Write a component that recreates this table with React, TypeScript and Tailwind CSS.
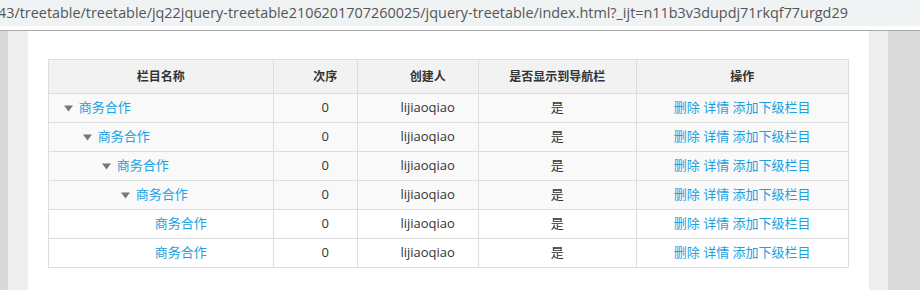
import React from "react";

type Row = { level: number; parent: boolean };

const ROWS: Row[] = [
  { level: 0, parent: true },
  { level: 1, parent: true },
  { level: 2, parent: true },
  { level: 3, parent: true },
  { level: 4, parent: false },
  { level: 4, parent: false },
];

const FONT = "font-['Open_Sans','Noto_Sans_CJK_SC',sans-serif]";

function Caret() {
  return (
    <svg width="9" height="7" viewBox="0 0 9 7" className="mr-[6px] shrink-0">
      <path d="M0 0.5 L9 0.5 L4.5 6.5 Z" fill="#777" />
    </svg>
  );
}

export default function App() {
  return (
    <div className={`h-[290px] w-[920px] overflow-hidden bg-white ${FONT}`}>
      <div className="flex h-[26px] items-center overflow-hidden whitespace-nowrap bg-[#eff3f4] text-[14.4px] text-[#555]">
        <span className="-ml-[2px]">
          43/treetable/treetable/jq22jquery-treetable2106201707260025/jquery-treetable/index.html?_ijt=n11b3v3dupdj71rkqf77urgd29
        </span>
      </div>
      <div className="h-[4px] bg-white" />
      <div className="h-px bg-[#aaa]" />

      <div className="flex h-[259px]">
        <div className="w-[8px] bg-[#d9d9d9]" />
        <div className="w-[20px] bg-[#eeeeee]" />
        <div className="flex-1 bg-white px-[20px] pt-[28px]">
          <table className="w-[800px] table-fixed border-collapse border border-[#dddddd] text-[13px]">
            <colgroup>
              <col className="w-[225px]" />
              <col className="w-[84px]" />
              <col className="w-[121px]" />
              <col className="w-[158px]" />
              <col className="w-[212px]" />
            </colgroup>
            <thead>
              <tr className="h-[34px] bg-[#f2f2f2] text-[12px] font-bold text-[#333]">
                <th className="border border-[#dddddd]">栏目名称</th>
                <th className="border border-[#dddddd] pl-[20px]">次序</th>
                <th className="border border-[#dddddd] pl-[20px]">创建人</th>
                <th className="border border-[#dddddd]">是否显示到导航栏</th>
                <th className="border border-[#dddddd]">操作</th>
              </tr>
            </thead>
            <tbody>
              {ROWS.map((r, i) => (
                <tr
                  key={i}
                  className={`h-[29px] text-[#333] ${r.parent ? "bg-[#f9f9f9]" : "bg-white"}`}
                >
                  <td className="border border-[#dddddd] pl-[15px]">
                    <div className="flex items-center" style={{ paddingLeft: r.level * 19 }}>
                      {r.parent ? <Caret /> : <span className="w-[15px] shrink-0" />}
                      <a className="text-[#1ba1e2]">商务合作</a>
                    </div>
                  </td>
                  <td className="border border-[#dddddd] pl-[20px] text-center">0</td>
                  <td className="border border-[#dddddd] pl-[20px] text-center">lijiaoqiao</td>
                  <td className="border border-[#dddddd] text-center">是</td>
                  <td className="border border-[#dddddd] text-center text-[#1ba1e2]">
                    <a>删除</a> <a>详情</a> <a>添加下级栏目</a>
                  </td>
                </tr>
              ))}
            </tbody>
          </table>
        </div>
        <div className="w-[20px] bg-[#eeeeee]" />
        <div className="w-[32px] bg-[#dadada]" />
      </div>
    </div>
  );
}
